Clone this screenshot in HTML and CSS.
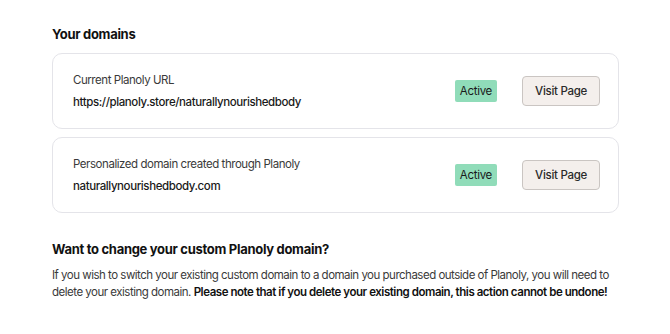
FILE: index.html
```html
<!DOCTYPE html>
<html>
<head>
  <title>Your domains</title>
  <link rel="stylesheet" href="styles.css">
</head>
<body>
  <div class="container">
    <h2>Your domains</h2>
    <div class="domain-list">
      <div class="domain-card">
        <div class="domain-info">
          <div class="domain-label">Current Planoly URL</div>
          <div class="domain-name">https://planoly.store/naturallynourishedbody</div>
        </div>
        <span class="status-badge">Active</span>
        <button class="visit-button">Visit Page</button>
      </div>
      <div class="domain-card">
        <div class="domain-info">
          <div class="domain-label">Personalized domain created through Planoly</div>
          <div class="domain-name">naturallynourishedbody.com</div>
        </div>
        <span class="status-badge">Active</span>
        <button class="visit-button">Visit Page</button>
      </div>
    </div>
    <h2 class="change-title">Want to change your custom Planoly domain?</h2>
    <p class="change-text">If you wish to switch your existing custom domain to a domain you purchased outside of Planoly, you will need to delete your existing domain. <strong>Please note that if you delete your existing domain, this action cannot be undone!</strong></p>
  </div>
</body>
</html>
```

FILE: styles.css
```css
body {
  font-family: Inter, "Noto Sans", sans-serif;
  background-color: #fff;
  color: #1a1a1a;
  margin: 0;
  padding: 0;
}

.container {
  padding: 26px 51px 0 52px;
}

h2 {
  font-size: 13px;
  font-weight: 700;
  letter-spacing: -0.3px;
  margin: 0 0 11px 0;
  color: #111;
}

.domain-list {
  display: flex;
  flex-direction: column;
  gap: 8px;
}

.domain-card {
  display: flex;
  align-items: center;
  height: 76px;
  box-sizing: border-box;
  padding: 0 18px 0 20px;
  border: 1px solid #e4e4e9;
  border-radius: 10px;
}

.domain-info {
  flex: 1;
}

.domain-label {
  font-size: 11.5px;
  letter-spacing: -0.45px;
  color: #3a3a3a;
  margin-bottom: 8px;
}

.domain-name {
  font-size: 11.5px;
  letter-spacing: -0.4px;
  font-weight: 500;
  color: #1a1a1a;
}

.status-badge {
  background-color: #90dcb9;
  color: #1a1a1a;
  font-size: 11.5px;
  letter-spacing: -0.3px;
  padding: 4px 5px;
  border-radius: 2px;
  margin-right: 25px;
}

.visit-button {
  font-family: inherit;
  font-size: 11.5px;
  letter-spacing: -0.3px;
  font-weight: 500;
  color: #2a2a2a;
  background-color: #f4efec;
  border: 1px solid #cac5c2;
  border-radius: 4px;
  width: 78px;
  height: 30px;
  padding: 0;
}

.change-title {
  margin-top: 28px;
  margin-bottom: 10px;
}

.change-text {
  font-size: 11.5px;
  letter-spacing: -0.5px;
  line-height: 17px;
  color: #3a3a3a;
  margin: 0;
}

.change-text strong {
  color: #111;
  font-weight: 600;
  letter-spacing: -0.45px;
}
```
